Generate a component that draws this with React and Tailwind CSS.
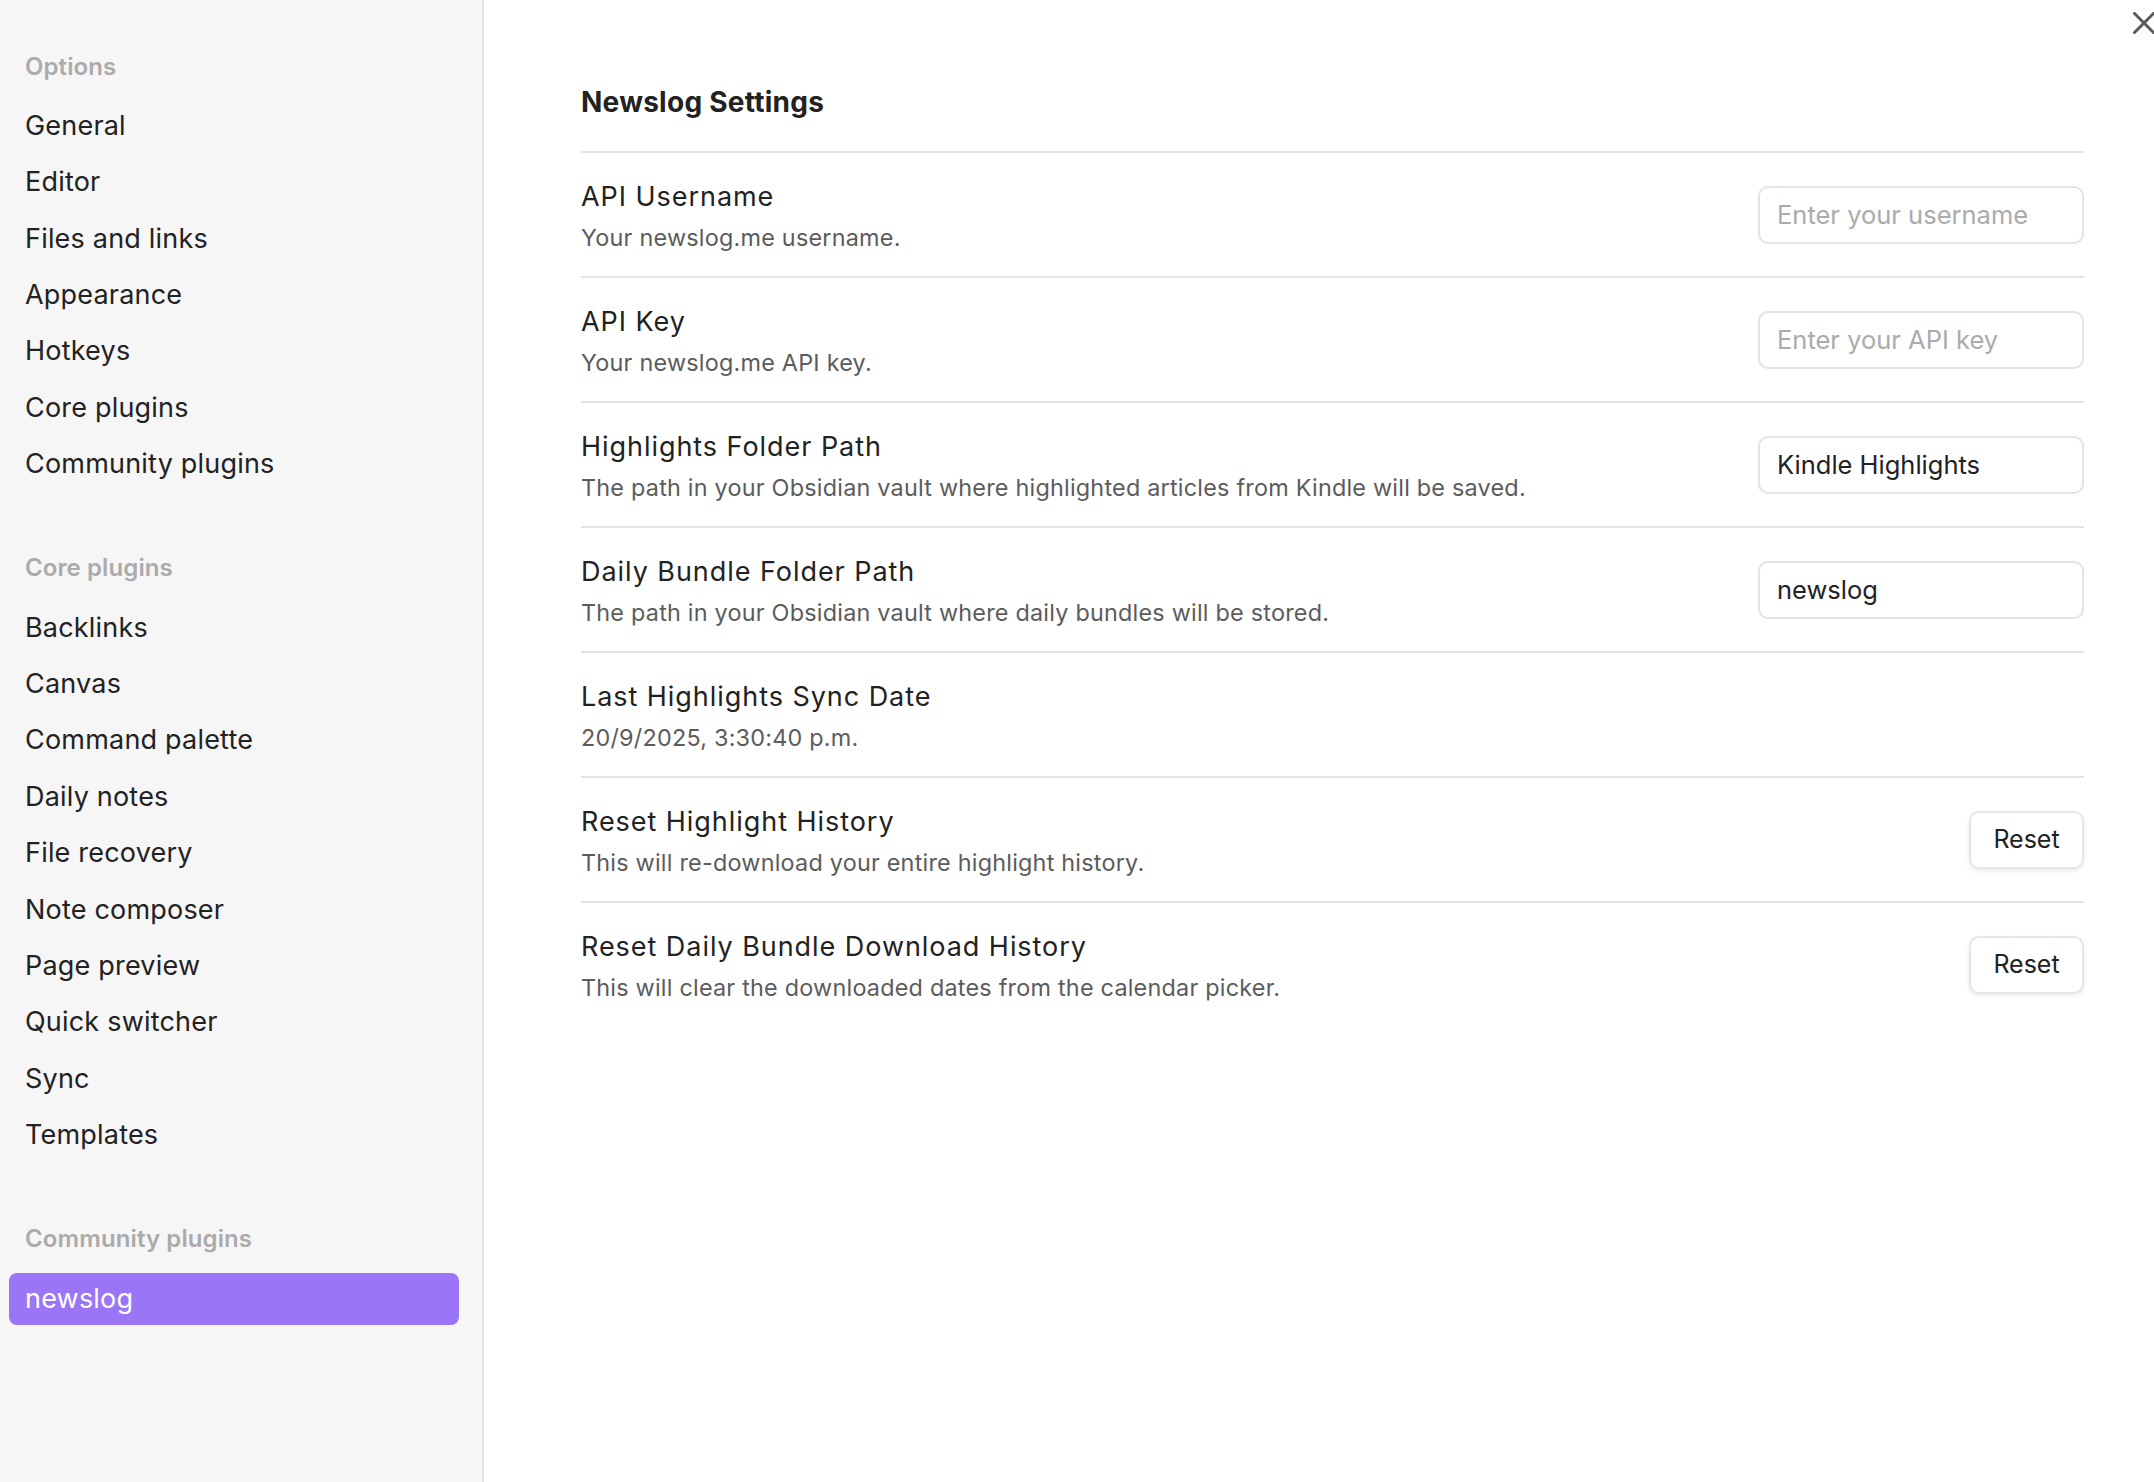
import React from "react";

const groups = [
  {
    title: "Options",
    items: ["General", "Editor", "Files and links", "Appearance", "Hotkeys", "Core plugins", "Community plugins"],
  },
  {
    title: "Core plugins",
    items: [
      "Backlinks",
      "Canvas",
      "Command palette",
      "Daily notes",
      "File recovery",
      "Note composer",
      "Page preview",
      "Quick switcher",
      "Sync",
      "Templates",
    ],
  },
  {
    title: "Community plugins",
    items: ["newslog"],
    active: "newslog",
  },
];

function TextInput({ placeholder, value }) {
  return (
    <input
      type="text"
      defaultValue={value}
      placeholder={placeholder}
      className="w-[326px] h-[58px] shrink-0 rounded-[10px] border-2 border-[#e3e3e3] bg-white px-[17px] text-[25.5px] text-[#222222] placeholder:text-[#ababab] outline-none font-['Inter',sans-serif]"
    />
  );
}

function ResetButton() {
  return (
    <button className="w-[115px] h-[58px] shrink-0 rounded-[10px] border-2 border-[#e6e6e6] bg-white text-[25px] text-[#222222] shadow-[0_2px_4px_rgba(0,0,0,0.08)] font-['Inter',sans-serif]">
      Reset
    </button>
  );
}

function Row({ name, desc, control }) {
  return (
    <div className="h-[125px] border-t-2 border-[#e3e3e3] flex items-center justify-between">
      <div className="pt-[5px]">
        <div className="text-[27px] leading-[34px] tracking-[0.95px] text-[#222222]">{name}</div>
        <div className="mt-[8.5px] text-[23.4px] leading-[32px] tracking-[0.22px] text-[#5c5c5c]">{desc}</div>
      </div>
      {control}
    </div>
  );
}

export default function App() {
  return (
    <div className="relative flex w-[2154px] h-[1482px] overflow-hidden bg-white font-['Inter',sans-serif]">
      {/* Sidebar */}
      <aside className="w-[484px] h-full shrink-0 bg-[#f6f6f6] border-r-2 border-[#e3e3e3] pt-[44.5px] pl-[9px] pr-[23px]">
        {groups.map((g, gi) => (
          <div key={g.title} className={gi === 0 ? "" : "mt-[56px]"}>
            <div className="h-[44px] flex items-center px-[16px] mb-[11.5px] text-[24px] font-semibold tracking-[0.1px] text-[#ababab]">
              {g.title}
            </div>
            <div className="flex flex-col gap-[4.4px]">
              {g.items.map((it) => (
                <div
                  key={it}
                  className={
                    it === g.active
                      ? "h-[52px] flex items-center px-[16px] rounded-[8px] bg-[#9a76f6] text-white text-[27px] tracking-[0.2px]"
                      : "h-[52px] flex items-center px-[16px] rounded-[8px] text-[#222222] text-[27px] tracking-[0.2px]"
                  }
                >
                  {it}
                </div>
              ))}
            </div>
          </div>
        ))}
      </aside>

      {/* Main */}
      <main className="flex-1 pl-[97px] pr-[70px] pt-[85px]">
        <div className="h-[34px] leading-[34px] mb-[32px] text-[28px] font-bold tracking-[0.25px] text-[#222222]">
          Newslog Settings
        </div>

        <Row
          name="API Username"
          desc="Your newslog.me username."
          control={<TextInput placeholder="Enter your username" />}
        />
        <Row name="API Key" desc="Your newslog.me API key." control={<TextInput placeholder="Enter your API key" />} />
        <Row
          name="Highlights Folder Path"
          desc="The path in your Obsidian vault where highlighted articles from Kindle will be saved."
          control={<TextInput value="Kindle Highlights" />}
        />
        <Row
          name="Daily Bundle Folder Path"
          desc="The path in your Obsidian vault where daily bundles will be stored."
          control={<TextInput value="newslog" />}
        />
        <Row name="Last Highlights Sync Date" desc="20/9/2025, 3:30:40 p.m." control={null} />
        <Row
          name="Reset Highlight History"
          desc="This will re-download your entire highlight history."
          control={<ResetButton />}
        />
        <Row
          name="Reset Daily Bundle Download History"
          desc="This will clear the downloaded dates from the calendar picker."
          control={<ResetButton />}
        />
      </main>

      {/* Close button */}
      <svg
        className="absolute left-[2133px] top-[12px]"
        width="22"
        height="22"
        viewBox="0 0 22 22"
        fill="none"
        stroke="#5a5a5a"
        strokeWidth="3"
        strokeLinecap="round"
      >
        <path d="M1.5 1.5 L20.5 20.5" />
        <path d="M20.5 1.5 L1.5 20.5" />
      </svg>
    </div>
  );
}
